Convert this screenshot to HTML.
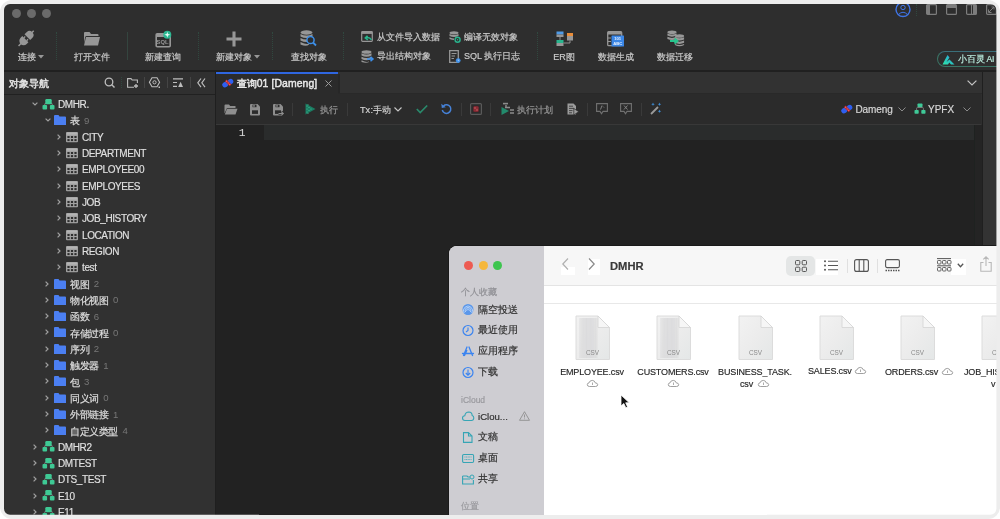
<!DOCTYPE html>
<html><head><meta charset="utf-8"><style>
*{margin:0;padding:0;box-sizing:border-box}
html,body{width:1000px;height:519px;overflow:hidden;background:#fff;font-family:"Liberation Sans",sans-serif}
.a{position:absolute}
#frame{position:absolute;left:0;top:0;width:1000px;height:519px;background:#ededed;border-radius:12px}
#win{will-change:transform;position:absolute;left:0;top:0;width:1000px;height:519px;background:#2e2e2e;clip-path:inset(4px 3.6px 4.2px 4px round 6px)}
.tl{position:absolute;width:9px;height:9px;border-radius:50%;background:#6a6a6a}
.lbl{position:absolute;color:#cacaca;font-size:9px;white-space:nowrap;line-height:11px;-webkit-text-stroke:0.2px currentColor}
.sep{position:absolute;width:0;border-left:1px dotted #30483f}
.vs{position:absolute;width:1px;background:#3c3c3c}
svg{position:absolute;overflow:visible}
.row{position:absolute;height:16px;line-height:16px;font-size:10px;letter-spacing:-0.4px;color:#e0e0e0;white-space:nowrap;-webkit-text-stroke:0.15px currentColor}
.cnt{color:#777777;margin-left:4.5px;font-size:9.6px;letter-spacing:0;-webkit-text-stroke:0;position:relative;top:-0.6px}
.fs{position:absolute;font-size:9px;color:#262626;white-space:nowrap;line-height:11px;letter-spacing:-0.15px;-webkit-text-stroke:0.15px currentColor}
</style></head><body>
<div id="frame"></div>
<div id="win">
<div class="tl" style="left:12.0px;top:9px"></div>
<div class="tl" style="left:26.8px;top:9px"></div>
<div class="tl" style="left:41.8px;top:9px"></div>
<svg style="left:895px;top:2px" width="16" height="16" viewBox="0 0 16 16"><circle cx="8" cy="7.5" r="7" fill="none" stroke="#3f74e6" stroke-width="1.4"/><circle cx="8" cy="5.5" r="2.2" fill="none" stroke="#3f74e6" stroke-width="1"/><path d="M3.5 12.5 Q8 8 12.5 12.5" fill="none" stroke="#3f74e6" stroke-width="1"/></svg>
<div class="sep" style="left:916px;top:4px;height:12px"></div>
<svg style="left:926px;top:4px" width="11" height="11" viewBox="0 0 11 11"><rect x="0.6" y="0.6" width="9.8" height="9.8" rx="1" fill="none" stroke="#7d7d7d" stroke-width="1.2"/><rect x="1" y="1" width="3" height="9" fill="#7d7d7d"/></svg>
<svg style="left:946px;top:4px" width="11" height="11" viewBox="0 0 11 11"><rect x="0.6" y="0.6" width="9.8" height="9.8" rx="1" fill="none" stroke="#7d7d7d" stroke-width="1.2"/><rect x="1" y="1" width="9" height="3" fill="#7d7d7d"/></svg>
<svg style="left:966px;top:4px" width="11" height="11" viewBox="0 0 11 11"><rect x="0.6" y="0.6" width="9.8" height="9.8" rx="1" fill="none" stroke="#7d7d7d" stroke-width="1.2"/><rect x="7" y="1" width="3" height="9" fill="#7d7d7d"/><line x1="5.5" y1="1" x2="5.5" y2="10" stroke="#7d7d7d"/></svg>
<svg style="left:986px;top:4px" width="11" height="11" viewBox="0 0 11 11"><rect x="0.6" y="0.6" width="9.8" height="9.8" rx="1" fill="none" stroke="#7d7d7d" stroke-width="1.2"/><path d="M3 8 L8 3 M5.5 3 H8 V5.5 M2.5 5.5 V8.5 H5.5" fill="none" stroke="#7d7d7d" stroke-width="1"/></svg>
<svg style="left:14px;top:27px" width="24" height="22" viewBox="0 0 24 22"><g transform="translate(12.2 11.3) rotate(45)" fill="#979797"><path d="M-4 -1.6 V-4.6 A4 4 0 0 1 4 -4.6 V-1.6 Z"/><rect x="-0.75" y="-10.6" width="1.5" height="3.5"/><path d="M-4.3 1.2 H4.3 V3.6 A4.3 4.3 0 0 1 -4.3 3.6 Z"/><rect x="-2.6" y="-0.6" width="1.3" height="2"/><rect x="1.3" y="-0.6" width="1.3" height="2"/><rect x="-0.75" y="7" width="1.5" height="3.8"/></g></svg>
<div class="lbl" style="left:27px;top:52px;font-size:9px;color:#cacaca;transform:translateX(-50%);">连接</div>
<svg style="left:38px;top:55px" width="6" height="4" viewBox="0 0 6 4"><path d="M0 0 H6 L3 3.5 Z" fill="#979797"/></svg>
<div class="sep" style="left:56px;top:32px;height:28px"></div>
<svg style="left:83px;top:31px" width="18" height="16" viewBox="0 0 18 16"><path d="M1 2 Q1 1 2 1 H6.5 L8 3 H14.5 Q15.5 3 15.5 4 V5 H3.5 Q2.5 5 2.2 6 L1 12 Z" fill="#979797"/><path d="M3 6 H17 L15 14.5 H1 Z" fill="#979797"/></svg>
<div class="lbl" style="left:92px;top:52px;font-size:9px;color:#cacaca;transform:translateX(-50%);">打开文件</div>
<div class="vs" style="left:127px;top:32px;height:28px;background:#34453f"></div>
<svg style="left:155px;top:30px" width="18" height="17" viewBox="0 0 18 17"><rect x="1.2" y="3.8" width="14" height="13" rx="1" fill="none" stroke="#979797" stroke-width="1.6"/><rect x="1.5" y="4" width="13.5" height="3" fill="#979797"/><text x="7.5" y="14.2" font-size="5.8" font-weight="bold" font-family="Liberation Sans" fill="#979797" text-anchor="middle">SQL</text><circle cx="12.3" cy="4.8" r="4" fill="#2bb892"/><path d="M12.3 1.8 L13 4.1 L15.3 4.8 L13 5.5 L12.3 7.8 L11.6 5.5 L9.3 4.8 L11.6 4.1 Z" fill="#eafff8"/></svg>
<div class="lbl" style="left:163px;top:52px;font-size:9px;color:#cacaca;transform:translateX(-50%);">新建查询</div>
<div class="sep" style="left:198px;top:32px;height:28px"></div>
<svg style="left:226px;top:31px" width="16" height="16" viewBox="0 0 16 16"><path d="M8 0.5 V15.5 M0.5 8 H15.5" stroke="#979797" stroke-width="3.1"/></svg>
<div class="lbl" style="left:234px;top:52px;font-size:9px;color:#cacaca;transform:translateX(-50%);">新建对象</div>
<svg style="left:254px;top:55px" width="6" height="4" viewBox="0 0 6 4"><path d="M0 0 H6 L3 3.5 Z" fill="#979797"/></svg>
<div class="sep" style="left:272px;top:32px;height:28px"></div>
<svg style="left:300px;top:30px" width="17" height="17" viewBox="0 0 17 17"><g fill="#979797"><ellipse cx="6.5" cy="2.5" rx="6" ry="2.2"/><path d="M0.5 4 Q6.5 7 12.5 4 V6.5 Q6.5 9.5 0.5 6.5 Z"/><path d="M0.5 8 Q6.5 11 12.5 8 V10.5 Q6.5 13.5 0.5 10.5 Z"/><path d="M0.5 12 Q6.5 15 9 13.5 V14.5 Q6.5 17 0.5 14.5 Z"/></g><circle cx="10.5" cy="10" r="3.6" fill="#2d2d2d" stroke="#3d8fe8" stroke-width="1.5"/><path d="M13 12.5 L16 15.5" stroke="#3d8fe8" stroke-width="1.8"/></svg>
<div class="lbl" style="left:309px;top:52px;font-size:9px;color:#cacaca;transform:translateX(-50%);">查找对象</div>
<div class="sep" style="left:343px;top:32px;height:28px"></div>
<svg style="left:361px;top:31px" width="12" height="11" viewBox="0 0 12 11"><rect x="0.7" y="0.7" width="10.6" height="9.6" rx="0.8" fill="none" stroke="#979797" stroke-width="1.2"/><rect x="0.7" y="0.7" width="10.6" height="2.2" fill="#979797"/><path d="M10.5 8.8 Q8.5 5.8 5 6.8 M6.5 4.8 L4.3 6.9 L6.8 8.8" fill="none" stroke="#29b58e" stroke-width="1.5"/></svg>
<div class="lbl" style="left:377px;top:32px;font-size:9px;color:#cacaca;">从文件导入数据</div>
<svg style="left:361px;top:50px" width="13" height="12" viewBox="0 0 13 12"><g fill="#979797"><ellipse cx="5.5" cy="2" rx="5" ry="1.8"/><path d="M0.5 3.3 Q5.5 5.8 10.5 3.3 V5.5 Q5.5 8 0.5 5.5 Z"/><path d="M0.5 6.8 Q5.5 9.3 10.5 6.8 V9 Q5.5 11.5 0.5 9 Z"/><path d="M0.5 10.3 Q5.5 12.8 8 11.5 V12 Q5.5 13.5 0.5 12 Z"/></g><path d="M6 9 H12 M9.5 6.8 L12 9 L9.5 11.2" fill="none" stroke="#3d8fe8" stroke-width="1.5"/></svg>
<div class="lbl" style="left:377px;top:51px;font-size:9px;color:#cacaca;">导出结构对象</div>
<svg style="left:449px;top:31px" width="12" height="12" viewBox="0 0 12 12"><g fill="#979797"><ellipse cx="5" cy="1.8" rx="4.5" ry="1.6"/><path d="M0.5 3 Q5 5.2 9.5 3 V5 Q5 7.2 0.5 5 Z"/><path d="M0.5 6.2 Q3 7.4 5 7.4 V9 Q3 9 0.5 8 Z"/></g><circle cx="8.6" cy="8.8" r="2.5" fill="none" stroke="#29b58e" stroke-width="1.4"/><circle cx="8.6" cy="8.8" r="0.7" fill="#29b58e"/></svg>
<div class="lbl" style="left:464px;top:32px;font-size:9px;color:#cacaca;">编译无效对象</div>
<svg style="left:449px;top:50px" width="12" height="13" viewBox="0 0 12 13"><path d="M0.7 0.7 H9.3 V12.3 H0.7 Z" fill="none" stroke="#979797" stroke-width="1.3"/><path d="M2.5 3.5 H7.5 M2.5 6 H6 M2.5 8.5 H5" stroke="#979797" stroke-width="1"/><circle cx="9.2" cy="10.6" r="2.4" fill="#3d8fe8"/><path d="M9.2 9.4 V10.7 H10.2" stroke="#dbe9ff" stroke-width="0.6" fill="none"/></svg>
<div class="lbl" style="left:464px;top:51px;font-size:9px;color:#cacaca;">SQL 执行日志</div>
<div class="sep" style="left:537px;top:32px;height:28px"></div>
<svg style="left:556px;top:31px" width="18" height="16" viewBox="0 0 18 16"><rect x="0.5" y="0.5" width="7" height="3" fill="#4f9be8"/><rect x="0.5" y="3.5" width="7" height="2.5" fill="#979797"/><rect x="11" y="2" width="6" height="3" fill="#e88d3a"/><rect x="11" y="5" width="6" height="4.5" fill="#979797"/><rect x="0.5" y="9" width="7" height="3" fill="#29b58e"/><rect x="0.5" y="12" width="7" height="3" fill="#979797"/><path d="M4 6 V9 M7.5 12 H14 V9.5" fill="none" stroke="#979797" stroke-width="0.9"/></svg>
<div class="lbl" style="left:564px;top:52px;font-size:9px;color:#cacaca;transform:translateX(-50%);">ER图</div>
<svg style="left:607px;top:31px" width="18" height="16" viewBox="0 0 18 16"><rect x="0.7" y="0.7" width="14" height="14" rx="1" fill="none" stroke="#979797" stroke-width="1.3"/><rect x="0.7" y="0.7" width="14" height="2.8" fill="#979797"/><path d="M0.7 7 H4 M0.7 10.5 H4" stroke="#979797" stroke-width="1"/><rect x="4.5" y="4.5" width="12.5" height="11" rx="0.6" fill="#3a86e6"/><text x="10.7" y="9" font-size="4.2" font-weight="bold" font-family="Liberation Sans" fill="#e8f2ff" text-anchor="middle">101</text><text x="10.7" y="14" font-size="4.2" font-weight="bold" font-family="Liberation Sans" fill="#e8f2ff" text-anchor="middle">ABC</text></svg>
<div class="lbl" style="left:616px;top:52px;font-size:9px;color:#cacaca;transform:translateX(-50%);">数据生成</div>
<svg style="left:667px;top:30px" width="18" height="17" viewBox="0 0 18 17"><g fill="#979797"><ellipse cx="5" cy="2.2" rx="4.6" ry="1.8"/><path d="M0.4 3.4 Q5 5.6 9.6 3.4 V5.6 Q5 7.8 0.4 5.6 Z"/><path d="M0.4 6.8 Q5 9 9.6 6.8 V9 Q5 11.2 0.4 9 Z"/><ellipse cx="12.5" cy="6" rx="4.6" ry="1.8"/><path d="M7.9 7.2 Q12.5 9.4 17.1 7.2 V9.4 Q12.5 11.6 7.9 9.4 Z"/><path d="M7.9 10.6 Q12.5 12.8 17.1 10.6 V12.8 Q12.5 15 7.9 12.8 Z"/><path d="M7.9 14 Q12.5 16.2 17.1 14 V15 Q12.5 17.5 7.9 15 Z"/></g><path d="M3 11 H10 M7.5 8.5 L10.5 11 L7.5 13.5" fill="none" stroke="#29c48e" stroke-width="1.8"/></svg>
<div class="lbl" style="left:675px;top:52px;font-size:9px;color:#cacaca;transform:translateX(-50%);">数据迁移</div>
<div class="a" style="left:936.5px;top:51px;width:80px;height:16px;border-radius:8px;border:1px solid #3b7566;border-top-color:#3a6f7a"></div>
<svg style="left:942px;top:54px" width="14" height="11" viewBox="0 0 14 11"><defs><linearGradient id="ai" x1="0" y1="1" x2="1" y2="0"><stop offset="0" stop-color="#2ee6a8"/><stop offset="0.6" stop-color="#2ab8c8"/><stop offset="1" stop-color="#3a7de8"/></linearGradient></defs><path d="M0.5 10.5 L5.5 1 L7.5 3.5 L4.5 8 L7.5 5.5 L12.5 10.5 L9 10.5 L7.3 8.5 L6 10.5 Z" fill="url(#ai)"/></svg>
<div class="lbl" style="left:958px;top:53.5px;font-size:8.6px;color:#b8eadc;letter-spacing:-0.2px">小百灵 AI</div>
<div class="a" style="left:0;top:72px;width:215px;height:447px;background:#313131"></div>
<div class="a" style="left:0;top:72px;width:215px;height:22px;background:#303030"></div>
<div class="a" style="left:214.5px;top:72px;width:1.5px;height:447px;background:#1f1f1f"></div>
<div class="a" style="left:0;top:93.5px;width:215px;height:1.5px;background:#212121"></div>
<div class="lbl" style="left:9.3px;top:77.8px;font-size:9.5px;color:#e4e4e4;-webkit-text-stroke:0.45px currentColor">对象导航</div>
<svg style="left:104px;top:77px" width="12" height="12" viewBox="0 0 12 12"><circle cx="5" cy="5" r="3.8" fill="none" stroke="#bdbdbd" stroke-width="1.3"/><path d="M7.8 7.8 L10.5 10.5" stroke="#bdbdbd" stroke-width="1.4"/></svg>
<div class="sep" style="left:120.5px;top:77px;height:11px"></div>
<div class="vs" style="left:143.5px;top:77px;height:11px;background:#454545"></div>
<div class="vs" style="left:166.5px;top:77px;height:11px;background:#454545"></div>
<div class="vs" style="left:189.5px;top:77px;height:11px;background:#454545"></div>
<svg style="left:127px;top:78px" width="12" height="10" viewBox="0 0 12 10"><path d="M7 9.3 H0.6 V0.6 H4 L5.2 2 H10.4 V5" fill="none" stroke="#bdbdbd" stroke-width="1.1"/><path d="M9 6 V10 M7 8 H11" stroke="#bdbdbd" stroke-width="1.3"/></svg>
<svg style="left:149px;top:77px" width="12" height="12" viewBox="0 0 12 12"><path d="M3 0.8 H8 L10.6 5.3 L8 9.8 H3 L0.4 5.3 Z" fill="none" stroke="#bdbdbd" stroke-width="1.1"/><circle cx="5.5" cy="5.3" r="1.6" fill="none" stroke="#bdbdbd" stroke-width="1"/><path d="M9.5 9.5 L11 9.5 L11 11 L9.5 11Z" fill="#bdbdbd"/></svg>
<svg style="left:173px;top:78px" width="11" height="10" viewBox="0 0 11 10"><path d="M0 0.8 H10 M0 4.5 H4 M0 8.3 H4" stroke="#bdbdbd" stroke-width="1.2"/><path d="M5.2 9 L7.6 3.8 L10 9 Z" fill="#bdbdbd"/></svg>
<svg style="left:197px;top:78px" width="9" height="10" viewBox="0 0 9 10"><path d="M4 0.5 L0.8 4.8 L4 9.1 M8 0.5 L4.8 4.8 L8 9.1" fill="none" stroke="#bdbdbd" stroke-width="1.15"/></svg>
<div class="a" style="left:216px;top:72px;width:767px;height:22px;background:#323232"></div>
<div class="a" style="left:216px;top:74px;width:122px;height:20px;background:#2b2b2b"></div>
<div class="a" style="left:216px;top:72px;width:122px;height:2px;background:#2f66e0"></div>
<div class="a" style="left:338px;top:74px;width:2px;height:20px;background:#272727"></div>
<div class="a" style="left:338px;top:93px;width:645px;height:1px;background:#292929"></div>
<svg style="left:222px;top:78px" width="12" height="10" viewBox="0 0 12 10"><ellipse cx="3.2" cy="6.6" rx="3" ry="2.7" transform="rotate(-35 3.2 6.6)" fill="#2f5ff0"/><ellipse cx="8.4" cy="3.6" rx="3" ry="2.7" transform="rotate(-35 8.4 3.6)" fill="#2f5ff0"/><path d="M3.7 2.4 L8.6 7.4" stroke="#b02c36" stroke-width="2.6"/><g fill="#ff5a50"><circle cx="4.6" cy="3.3" r="0.7"/><circle cx="6.2" cy="4.9" r="0.7"/><circle cx="7.6" cy="6.4" r="0.7"/></g></svg>
<div class="lbl" style="left:236.5px;top:77.8px;font-size:10.4px;color:#e8e8e8;-webkit-text-stroke:0.45px currentColor;letter-spacing:0.1px">查询01 [Dameng]</div>
<svg style="left:325px;top:80px" width="7" height="7" viewBox="0 0 7 7"><path d="M0.5 0.5 L6.5 6.5 M6.5 0.5 L0.5 6.5" stroke="#9a9a9a" stroke-width="1"/></svg>
<svg style="left:966.5px;top:79.5px" width="10" height="6" viewBox="0 0 10 6"><path d="M0.6 0.6 L5 5 L9.4 0.6" fill="none" stroke="#c4c4c4" stroke-width="1.2"/></svg>
<div class="a" style="left:216px;top:94px;width:765px;height:30px;background:#2b2b2b"></div>
<div class="a" style="left:216px;top:124px;width:765px;height:1px;background:#383838"></div>
<svg style="left:224px;top:104px" width="14" height="11" viewBox="0 0 14 11"><path d="M0.5 1.5 Q0.5 0.5 1.5 0.5 H5 L6.2 2 H11.5 V4 H3 L0.5 9.5 Z" fill="#8e8e8e"/><path d="M3 4.8 H13.5 L11.5 10.5 H0.8 Z" fill="#8e8e8e"/></svg>
<svg style="left:249.5px;top:103.5px" width="10" height="11.5" viewBox="0 0 10 11.5"><path d="M0 1 Q0 0 1 0 H7.5 L10 2.5 V10.5 Q10 11.5 9 11.5 H1 Q0 11.5 0 10.5 Z" fill="#8e8e8e"/><rect x="2.5" y="0.6" width="4" height="2.6" fill="#2b2b2b"/><rect x="3.3" y="0.9" width="1.4" height="1.9" fill="#8e8e8e"/><rect x="2" y="6.3" width="6" height="3.6" fill="#2b2b2b"/></svg>
<svg style="left:273px;top:103.5px" width="12" height="12" viewBox="0 0 12 12"><path d="M0 1 Q0 0 1 0 H7.5 L10 2.5 V10.5 Q10 11.5 9 11.5 H1 Q0 11.5 0 10.5 Z" fill="#8e8e8e"/><rect x="2.5" y="0.6" width="4" height="2.6" fill="#2b2b2b"/><rect x="3.3" y="0.9" width="1.4" height="1.9" fill="#8e8e8e"/><rect x="2" y="6.3" width="6" height="3.6" fill="#2b2b2b"/><path d="M5.5 9.5 H10 M8.3 7.6 L10.3 9.5 L8.3 11.4" fill="none" stroke="#2b2b2b" stroke-width="2.4"/><path d="M5.5 9.5 H10 M8.3 7.6 L10.3 9.5 L8.3 11.4" fill="none" stroke="#8e8e8e" stroke-width="1.1"/></svg>
<div class="vs" style="left:292px;top:103px;height:13px;background:#3a3a3a"></div>
<div class="vs" style="left:347px;top:103px;height:13px;background:#3a3a3a"></div>
<div class="vs" style="left:461px;top:103px;height:13px;background:#3a3a3a"></div>
<div class="vs" style="left:490px;top:103px;height:13px;background:#3a3a3a"></div>
<div class="vs" style="left:587px;top:103px;height:13px;background:#3a3a3a"></div>
<div class="vs" style="left:641px;top:103px;height:13px;background:#3a3a3a"></div>
<svg style="left:305px;top:103px" width="11" height="12" viewBox="0 0 11 12"><path d="M0.5 0.5 L10.5 6 L0.5 11.5 Z" fill="#1b7d63"/><g fill="#4fcfa5"><circle cx="2" cy="3" r="0.5"/><circle cx="2" cy="6" r="0.5"/><circle cx="2" cy="9" r="0.5"/><circle cx="4" cy="4.5" r="0.5"/><circle cx="4" cy="7.5" r="0.5"/><circle cx="6" cy="6" r="0.5"/><circle cx="3" cy="1.8" r="0.5"/><circle cx="3" cy="10.2" r="0.5"/></g></svg>
<div class="lbl" style="left:320px;top:104.5px;font-size:9px;color:#969696;">执行</div>
<div class="lbl" style="left:360px;top:104.8px;font-size:9.2px;color:#d0d0d0;letter-spacing:-0.2px">Tx<span style="margin:0 0.6px">:</span>手动</div>
<svg style="left:394px;top:107px" width="8" height="5" viewBox="0 0 8 5"><path d="M0.5 0.5 L4 4 L7.5 0.5" fill="none" stroke="#c8c8c8" stroke-width="1.1"/></svg>
<svg style="left:416px;top:104px" width="12" height="10" viewBox="0 0 12 10"><path d="M0.8 5 L4.2 8.5 L11.2 1.5" fill="none" stroke="#2a8a6c" stroke-width="1.7"/></svg>
<svg style="left:441px;top:103px" width="11" height="12" viewBox="0 0 11 12"><path d="M2.5 3 A4.3 4.3 0 1 1 1.3 7" fill="none" stroke="#4682d8" stroke-width="1.5"/><path d="M0.3 0.8 L0.8 5 L4.8 4.2 Z" fill="#4682d8"/></svg>
<svg style="left:470px;top:103px" width="12" height="12" viewBox="0 0 12 12"><rect x="0.6" y="0.6" width="10.8" height="10.8" rx="1" fill="none" stroke="#5a5a5a" stroke-width="1.2"/><rect x="3.2" y="3" width="5.6" height="6" rx="1.5" fill="#7a2630"/><circle cx="5" cy="5" r="0.8" fill="#e06a6a"/><circle cx="7" cy="7" r="0.8" fill="#e06a6a"/><circle cx="7" cy="5" r="0.6" fill="#c04a4a"/><circle cx="5" cy="7" r="0.6" fill="#c04a4a"/></svg>
<svg style="left:501px;top:102px" width="14" height="13" viewBox="0 0 14 13"><path d="M0.5 5 L8 9 L0.5 13 Z" fill="#238a6c"/><rect x="2" y="0.8" width="5" height="1.6" fill="#8c8c8c"/><path d="M5 3 V5 M4 5.5 H9 M9 8 H13 M9 11 H13" stroke="#8c8c8c" stroke-width="1.4"/></svg>
<div class="lbl" style="left:517px;top:104.5px;font-size:9px;color:#969696;">执行计划</div>
<svg style="left:566.5px;top:103px" width="12" height="12" viewBox="0 0 12 12"><path d="M0.5 0.5 H6.5 L9 3 V11.5 H0.5 Z" fill="#9c9c9c"/><path d="M2 3.2 H6 M2 5.4 H7 M2 7.6 H5.5 M2 9.8 H5" stroke="#3a3a3a" stroke-width="0.9"/><path d="M6.8 5.5 L11.8 8.7 L6.8 11.9 Z" fill="#9c9c9c" stroke="#2b2b2b" stroke-width="0.7"/></svg>
<svg style="left:596px;top:103px" width="12" height="12" viewBox="0 0 12 12"><path d="M0.6 0.6 H11.4 V8.4 H7 L5.5 10.8 L4 8.4 H0.6 Z" fill="none" stroke="#707070" stroke-width="1.1"/><path d="M4.5 6.5 L6 2.5 M7 3.5 L8 4.5" stroke="#8a8a8a" stroke-width="0.9"/></svg>
<svg style="left:620px;top:103px" width="12" height="12" viewBox="0 0 12 12"><path d="M0.6 0.6 H11.4 V8.4 H7 L5.5 10.8 L4 8.4 H0.6 Z" fill="none" stroke="#707070" stroke-width="1.1"/><path d="M4 2.5 L7.5 6.5 M7.5 2.5 L4 6.5" stroke="#8a8a8a" stroke-width="0.9"/></svg>
<svg style="left:650px;top:102px" width="12" height="13" viewBox="0 0 12 13"><path d="M1 12 L8 5" stroke="#9a9a9a" stroke-width="1.8"/><path d="M3 0.5 L3.5 1.8 L4.8 2.3 L3.5 2.8 L3 4.1 L2.5 2.8 L1.2 2.3 L2.5 1.8Z" fill="#3f8fd8"/><path d="M9.5 0.5 L10 1.8 L11.3 2.3 L10 2.8 L9.5 4.1 L9 2.8 L7.7 2.3 L9 1.8Z" fill="#3f8fd8"/><path d="M9.5 7.5 L10 8.8 L11.3 9.3 L10 9.8 L9.5 11.1 L9 9.8 L7.7 9.3 L9 8.8Z" fill="#3f8fd8"/></svg>
<svg style="left:840.5px;top:104px" width="12" height="10" viewBox="0 0 12 10"><ellipse cx="3.2" cy="6.6" rx="3" ry="2.7" transform="rotate(-35 3.2 6.6)" fill="#2f5ff0"/><ellipse cx="8.4" cy="3.6" rx="3" ry="2.7" transform="rotate(-35 8.4 3.6)" fill="#2f5ff0"/><path d="M3.7 2.4 L8.6 7.4" stroke="#b02c36" stroke-width="2.6"/><g fill="#ff5a50"><circle cx="4.6" cy="3.3" r="0.7"/><circle cx="6.2" cy="4.9" r="0.7"/><circle cx="7.6" cy="6.4" r="0.7"/></g></svg>
<div class="lbl" style="left:855.5px;top:104px;font-size:10px;color:#d6d6d6;letter-spacing:-0.1px">Dameng</div>
<svg style="left:898px;top:107px" width="8" height="5" viewBox="0 0 8 5"><path d="M0.5 0.5 L4 4 L7.5 0.5" fill="none" stroke="#8a8a8a" stroke-width="1"/></svg>
<svg style="left:914px;top:103px" width="12" height="11" viewBox="0 0 12 11"><g fill="#3fc897"><rect x="3.5" y="0.5" width="5" height="3.8" rx="0.8"/><rect x="0.5" y="7" width="4.2" height="3.8" rx="0.8"/><rect x="7.3" y="7" width="4.2" height="3.8" rx="0.8"/></g><path d="M2.6 7 V5.5 Q2.6 4.5 3.6 4.5 H8.4 Q9.4 4.5 9.4 5.5 V7" fill="none" stroke="#8a8a8a" stroke-width="0.8"/></svg>
<div class="lbl" style="left:928px;top:104px;font-size:10px;color:#d6d6d6;">YPFX</div>
<svg style="left:963px;top:107px" width="8" height="5" viewBox="0 0 8 5"><path d="M0.5 0.5 L4 4 L7.5 0.5" fill="none" stroke="#8a8a8a" stroke-width="1"/></svg>
<div class="a" style="left:216px;top:125px;width:759px;height:395px;background:#222222"></div>
<div class="a" style="left:264px;top:125px;width:711px;height:15px;background:#2a2c2c"></div>
<div class="lbl" style="left:239px;top:127.5px;font-size:10.5px;color:#d4d4d4;font-family:Liberation Mono,monospace;-webkit-text-stroke:0.2px currentColor">1</div>
<div class="a" style="left:974px;top:125px;width:8px;height:395px;background:#242424;border-left:1px solid #1e2220"></div>
<div class="a" style="left:982px;top:72px;width:14px;height:447px;background:#333333;border-left:1px solid #1f1f1f"></div>
<svg style="left:32px;top:102.0px" width="7" height="4" viewBox="0 0 7 4"><path d="M0.6 0.6 L3 3 L5.4 0.6" fill="none" stroke="#a0a0a0" stroke-width="1.2"/></svg>
<svg style="left:42px;top:98.5px" width="13" height="11" viewBox="0 0 13 11"><path d="M2.8 7 V5.5 Q2.8 4 4.3 4 H8.7 Q10.2 4 10.2 5.5 V7" fill="none" stroke="#9a9a9a" stroke-width="0.9"/><g fill="#3ec994"><rect x="3.3" y="0" width="6.4" height="5.2" rx="1.2"/><rect x="0.5" y="6" width="4.6" height="4.6" rx="1"/><rect x="7.9" y="6" width="4.6" height="4.6" rx="1"/></g></svg>
<div class="row" style="left:58px;top:97.1px">DMHR.</div>
<svg style="left:44.5px;top:118.32px" width="7" height="4" viewBox="0 0 7 4"><path d="M0.6 0.6 L3 3 L5.4 0.6" fill="none" stroke="#a0a0a0" stroke-width="1.2"/></svg>
<svg style="left:54px;top:115.32px" width="12" height="10" viewBox="0 0 12 10"><path d="M0 1 Q0 0 1 0 H4.5 L5.5 1.5 H11 Q12 1.5 12 2.5 V10 H0 Z" fill="#4b7ff2"/></svg>
<div class="row" style="left:70px;top:113.41999999999999px">表<span class="cnt">9</span></div>
<svg style="left:56.5px;top:133.64px" width="4" height="7" viewBox="0 0 4 7"><path d="M0.6 0.6 L3 3 L0.6 5.4" fill="none" stroke="#a0a0a0" stroke-width="1.2"/></svg>
<svg style="left:66px;top:131.83999999999997px" width="12" height="10.2" viewBox="0 0 12 10.2"><rect x="0" y="0" width="12" height="10.2" rx="1" fill="#a2a2a2"/><rect x="0.8" y="0.6" width="10.4" height="2" fill="#b4b4b4"/><rect x="1.4" y="4" width="2.2" height="2" fill="#2e2e2e"/><rect x="4.9" y="4" width="2.2" height="2" fill="#2e2e2e"/><rect x="8.4" y="4" width="2.2" height="2" fill="#2e2e2e"/><rect x="1.4" y="7.1" width="2.2" height="2" fill="#2e2e2e"/><rect x="4.9" y="7.1" width="2.2" height="2" fill="#2e2e2e"/><rect x="8.4" y="7.1" width="2.2" height="2" fill="#2e2e2e"/></svg>
<div class="row" style="left:82px;top:129.73999999999998px">CITY</div>
<svg style="left:56.5px;top:149.96px" width="4" height="7" viewBox="0 0 4 7"><path d="M0.6 0.6 L3 3 L0.6 5.4" fill="none" stroke="#a0a0a0" stroke-width="1.2"/></svg>
<svg style="left:66px;top:148.16px" width="12" height="10.2" viewBox="0 0 12 10.2"><rect x="0" y="0" width="12" height="10.2" rx="1" fill="#a2a2a2"/><rect x="0.8" y="0.6" width="10.4" height="2" fill="#b4b4b4"/><rect x="1.4" y="4" width="2.2" height="2" fill="#2e2e2e"/><rect x="4.9" y="4" width="2.2" height="2" fill="#2e2e2e"/><rect x="8.4" y="4" width="2.2" height="2" fill="#2e2e2e"/><rect x="1.4" y="7.1" width="2.2" height="2" fill="#2e2e2e"/><rect x="4.9" y="7.1" width="2.2" height="2" fill="#2e2e2e"/><rect x="8.4" y="7.1" width="2.2" height="2" fill="#2e2e2e"/></svg>
<div class="row" style="left:82px;top:146.06px">DEPARTMENT</div>
<svg style="left:56.5px;top:166.28px" width="4" height="7" viewBox="0 0 4 7"><path d="M0.6 0.6 L3 3 L0.6 5.4" fill="none" stroke="#a0a0a0" stroke-width="1.2"/></svg>
<svg style="left:66px;top:164.48px" width="12" height="10.2" viewBox="0 0 12 10.2"><rect x="0" y="0" width="12" height="10.2" rx="1" fill="#a2a2a2"/><rect x="0.8" y="0.6" width="10.4" height="2" fill="#b4b4b4"/><rect x="1.4" y="4" width="2.2" height="2" fill="#2e2e2e"/><rect x="4.9" y="4" width="2.2" height="2" fill="#2e2e2e"/><rect x="8.4" y="4" width="2.2" height="2" fill="#2e2e2e"/><rect x="1.4" y="7.1" width="2.2" height="2" fill="#2e2e2e"/><rect x="4.9" y="7.1" width="2.2" height="2" fill="#2e2e2e"/><rect x="8.4" y="7.1" width="2.2" height="2" fill="#2e2e2e"/></svg>
<div class="row" style="left:82px;top:162.38px">EMPLOYEE00</div>
<svg style="left:56.5px;top:182.6px" width="4" height="7" viewBox="0 0 4 7"><path d="M0.6 0.6 L3 3 L0.6 5.4" fill="none" stroke="#a0a0a0" stroke-width="1.2"/></svg>
<svg style="left:66px;top:180.79999999999998px" width="12" height="10.2" viewBox="0 0 12 10.2"><rect x="0" y="0" width="12" height="10.2" rx="1" fill="#a2a2a2"/><rect x="0.8" y="0.6" width="10.4" height="2" fill="#b4b4b4"/><rect x="1.4" y="4" width="2.2" height="2" fill="#2e2e2e"/><rect x="4.9" y="4" width="2.2" height="2" fill="#2e2e2e"/><rect x="8.4" y="4" width="2.2" height="2" fill="#2e2e2e"/><rect x="1.4" y="7.1" width="2.2" height="2" fill="#2e2e2e"/><rect x="4.9" y="7.1" width="2.2" height="2" fill="#2e2e2e"/><rect x="8.4" y="7.1" width="2.2" height="2" fill="#2e2e2e"/></svg>
<div class="row" style="left:82px;top:178.7px">EMPLOYEES</div>
<svg style="left:56.5px;top:198.92000000000002px" width="4" height="7" viewBox="0 0 4 7"><path d="M0.6 0.6 L3 3 L0.6 5.4" fill="none" stroke="#a0a0a0" stroke-width="1.2"/></svg>
<svg style="left:66px;top:197.12px" width="12" height="10.2" viewBox="0 0 12 10.2"><rect x="0" y="0" width="12" height="10.2" rx="1" fill="#a2a2a2"/><rect x="0.8" y="0.6" width="10.4" height="2" fill="#b4b4b4"/><rect x="1.4" y="4" width="2.2" height="2" fill="#2e2e2e"/><rect x="4.9" y="4" width="2.2" height="2" fill="#2e2e2e"/><rect x="8.4" y="4" width="2.2" height="2" fill="#2e2e2e"/><rect x="1.4" y="7.1" width="2.2" height="2" fill="#2e2e2e"/><rect x="4.9" y="7.1" width="2.2" height="2" fill="#2e2e2e"/><rect x="8.4" y="7.1" width="2.2" height="2" fill="#2e2e2e"/></svg>
<div class="row" style="left:82px;top:195.02px">JOB</div>
<svg style="left:56.5px;top:215.24px" width="4" height="7" viewBox="0 0 4 7"><path d="M0.6 0.6 L3 3 L0.6 5.4" fill="none" stroke="#a0a0a0" stroke-width="1.2"/></svg>
<svg style="left:66px;top:213.44px" width="12" height="10.2" viewBox="0 0 12 10.2"><rect x="0" y="0" width="12" height="10.2" rx="1" fill="#a2a2a2"/><rect x="0.8" y="0.6" width="10.4" height="2" fill="#b4b4b4"/><rect x="1.4" y="4" width="2.2" height="2" fill="#2e2e2e"/><rect x="4.9" y="4" width="2.2" height="2" fill="#2e2e2e"/><rect x="8.4" y="4" width="2.2" height="2" fill="#2e2e2e"/><rect x="1.4" y="7.1" width="2.2" height="2" fill="#2e2e2e"/><rect x="4.9" y="7.1" width="2.2" height="2" fill="#2e2e2e"/><rect x="8.4" y="7.1" width="2.2" height="2" fill="#2e2e2e"/></svg>
<div class="row" style="left:82px;top:211.34px">JOB_HISTORY</div>
<svg style="left:56.5px;top:231.56px" width="4" height="7" viewBox="0 0 4 7"><path d="M0.6 0.6 L3 3 L0.6 5.4" fill="none" stroke="#a0a0a0" stroke-width="1.2"/></svg>
<svg style="left:66px;top:229.76px" width="12" height="10.2" viewBox="0 0 12 10.2"><rect x="0" y="0" width="12" height="10.2" rx="1" fill="#a2a2a2"/><rect x="0.8" y="0.6" width="10.4" height="2" fill="#b4b4b4"/><rect x="1.4" y="4" width="2.2" height="2" fill="#2e2e2e"/><rect x="4.9" y="4" width="2.2" height="2" fill="#2e2e2e"/><rect x="8.4" y="4" width="2.2" height="2" fill="#2e2e2e"/><rect x="1.4" y="7.1" width="2.2" height="2" fill="#2e2e2e"/><rect x="4.9" y="7.1" width="2.2" height="2" fill="#2e2e2e"/><rect x="8.4" y="7.1" width="2.2" height="2" fill="#2e2e2e"/></svg>
<div class="row" style="left:82px;top:227.66px">LOCATION</div>
<svg style="left:56.5px;top:247.88px" width="4" height="7" viewBox="0 0 4 7"><path d="M0.6 0.6 L3 3 L0.6 5.4" fill="none" stroke="#a0a0a0" stroke-width="1.2"/></svg>
<svg style="left:66px;top:246.07999999999998px" width="12" height="10.2" viewBox="0 0 12 10.2"><rect x="0" y="0" width="12" height="10.2" rx="1" fill="#a2a2a2"/><rect x="0.8" y="0.6" width="10.4" height="2" fill="#b4b4b4"/><rect x="1.4" y="4" width="2.2" height="2" fill="#2e2e2e"/><rect x="4.9" y="4" width="2.2" height="2" fill="#2e2e2e"/><rect x="8.4" y="4" width="2.2" height="2" fill="#2e2e2e"/><rect x="1.4" y="7.1" width="2.2" height="2" fill="#2e2e2e"/><rect x="4.9" y="7.1" width="2.2" height="2" fill="#2e2e2e"/><rect x="8.4" y="7.1" width="2.2" height="2" fill="#2e2e2e"/></svg>
<div class="row" style="left:82px;top:243.98px">REGION</div>
<svg style="left:56.5px;top:264.2px" width="4" height="7" viewBox="0 0 4 7"><path d="M0.6 0.6 L3 3 L0.6 5.4" fill="none" stroke="#a0a0a0" stroke-width="1.2"/></svg>
<svg style="left:66px;top:262.4px" width="12" height="10.2" viewBox="0 0 12 10.2"><rect x="0" y="0" width="12" height="10.2" rx="1" fill="#a2a2a2"/><rect x="0.8" y="0.6" width="10.4" height="2" fill="#b4b4b4"/><rect x="1.4" y="4" width="2.2" height="2" fill="#2e2e2e"/><rect x="4.9" y="4" width="2.2" height="2" fill="#2e2e2e"/><rect x="8.4" y="4" width="2.2" height="2" fill="#2e2e2e"/><rect x="1.4" y="7.1" width="2.2" height="2" fill="#2e2e2e"/><rect x="4.9" y="7.1" width="2.2" height="2" fill="#2e2e2e"/><rect x="8.4" y="7.1" width="2.2" height="2" fill="#2e2e2e"/></svg>
<div class="row" style="left:82px;top:260.3px">test</div>
<svg style="left:44.6px;top:280.52px" width="4" height="7" viewBox="0 0 4 7"><path d="M0.6 0.6 L3 3 L0.6 5.4" fill="none" stroke="#a0a0a0" stroke-width="1.2"/></svg>
<svg style="left:54px;top:278.52px" width="12" height="10" viewBox="0 0 12 10"><path d="M0 1 Q0 0 1 0 H4.5 L5.5 1.5 H11 Q12 1.5 12 2.5 V10 H0 Z" fill="#4b7ff2"/></svg>
<div class="row" style="left:70px;top:276.62px">视图<span class="cnt">2</span></div>
<svg style="left:44.6px;top:296.84000000000003px" width="4" height="7" viewBox="0 0 4 7"><path d="M0.6 0.6 L3 3 L0.6 5.4" fill="none" stroke="#a0a0a0" stroke-width="1.2"/></svg>
<svg style="left:54px;top:294.84000000000003px" width="12" height="10" viewBox="0 0 12 10"><path d="M0 1 Q0 0 1 0 H4.5 L5.5 1.5 H11 Q12 1.5 12 2.5 V10 H0 Z" fill="#4b7ff2"/></svg>
<div class="row" style="left:70px;top:292.94000000000005px">物化视图<span class="cnt">0</span></div>
<svg style="left:44.6px;top:313.15999999999997px" width="4" height="7" viewBox="0 0 4 7"><path d="M0.6 0.6 L3 3 L0.6 5.4" fill="none" stroke="#a0a0a0" stroke-width="1.2"/></svg>
<svg style="left:54px;top:311.15999999999997px" width="12" height="10" viewBox="0 0 12 10"><path d="M0 1 Q0 0 1 0 H4.5 L5.5 1.5 H11 Q12 1.5 12 2.5 V10 H0 Z" fill="#4b7ff2"/></svg>
<div class="row" style="left:70px;top:309.26px">函数<span class="cnt">6</span></div>
<svg style="left:44.6px;top:329.48px" width="4" height="7" viewBox="0 0 4 7"><path d="M0.6 0.6 L3 3 L0.6 5.4" fill="none" stroke="#a0a0a0" stroke-width="1.2"/></svg>
<svg style="left:54px;top:327.48px" width="12" height="10" viewBox="0 0 12 10"><path d="M0 1 Q0 0 1 0 H4.5 L5.5 1.5 H11 Q12 1.5 12 2.5 V10 H0 Z" fill="#4b7ff2"/></svg>
<div class="row" style="left:70px;top:325.58000000000004px">存储过程<span class="cnt">0</span></div>
<svg style="left:44.6px;top:345.8px" width="4" height="7" viewBox="0 0 4 7"><path d="M0.6 0.6 L3 3 L0.6 5.4" fill="none" stroke="#a0a0a0" stroke-width="1.2"/></svg>
<svg style="left:54px;top:343.8px" width="12" height="10" viewBox="0 0 12 10"><path d="M0 1 Q0 0 1 0 H4.5 L5.5 1.5 H11 Q12 1.5 12 2.5 V10 H0 Z" fill="#4b7ff2"/></svg>
<div class="row" style="left:70px;top:341.90000000000003px">序列<span class="cnt">2</span></div>
<svg style="left:44.6px;top:362.12px" width="4" height="7" viewBox="0 0 4 7"><path d="M0.6 0.6 L3 3 L0.6 5.4" fill="none" stroke="#a0a0a0" stroke-width="1.2"/></svg>
<svg style="left:54px;top:360.12px" width="12" height="10" viewBox="0 0 12 10"><path d="M0 1 Q0 0 1 0 H4.5 L5.5 1.5 H11 Q12 1.5 12 2.5 V10 H0 Z" fill="#4b7ff2"/></svg>
<div class="row" style="left:70px;top:358.22px">触发器<span class="cnt">1</span></div>
<svg style="left:44.6px;top:378.44px" width="4" height="7" viewBox="0 0 4 7"><path d="M0.6 0.6 L3 3 L0.6 5.4" fill="none" stroke="#a0a0a0" stroke-width="1.2"/></svg>
<svg style="left:54px;top:376.44px" width="12" height="10" viewBox="0 0 12 10"><path d="M0 1 Q0 0 1 0 H4.5 L5.5 1.5 H11 Q12 1.5 12 2.5 V10 H0 Z" fill="#4b7ff2"/></svg>
<div class="row" style="left:70px;top:374.54px">包<span class="cnt">3</span></div>
<svg style="left:44.6px;top:394.76px" width="4" height="7" viewBox="0 0 4 7"><path d="M0.6 0.6 L3 3 L0.6 5.4" fill="none" stroke="#a0a0a0" stroke-width="1.2"/></svg>
<svg style="left:54px;top:392.76px" width="12" height="10" viewBox="0 0 12 10"><path d="M0 1 Q0 0 1 0 H4.5 L5.5 1.5 H11 Q12 1.5 12 2.5 V10 H0 Z" fill="#4b7ff2"/></svg>
<div class="row" style="left:70px;top:390.86px">同义词<span class="cnt">0</span></div>
<svg style="left:44.6px;top:411.08px" width="4" height="7" viewBox="0 0 4 7"><path d="M0.6 0.6 L3 3 L0.6 5.4" fill="none" stroke="#a0a0a0" stroke-width="1.2"/></svg>
<svg style="left:54px;top:409.08px" width="12" height="10" viewBox="0 0 12 10"><path d="M0 1 Q0 0 1 0 H4.5 L5.5 1.5 H11 Q12 1.5 12 2.5 V10 H0 Z" fill="#4b7ff2"/></svg>
<div class="row" style="left:70px;top:407.18px">外部链接<span class="cnt">1</span></div>
<svg style="left:44.6px;top:427.4px" width="4" height="7" viewBox="0 0 4 7"><path d="M0.6 0.6 L3 3 L0.6 5.4" fill="none" stroke="#a0a0a0" stroke-width="1.2"/></svg>
<svg style="left:54px;top:425.4px" width="12" height="10" viewBox="0 0 12 10"><path d="M0 1 Q0 0 1 0 H4.5 L5.5 1.5 H11 Q12 1.5 12 2.5 V10 H0 Z" fill="#4b7ff2"/></svg>
<div class="row" style="left:70px;top:423.5px">自定义类型<span class="cnt">4</span></div>
<svg style="left:32.7px;top:443.72px" width="4" height="7" viewBox="0 0 4 7"><path d="M0.6 0.6 L3 3 L0.6 5.4" fill="none" stroke="#a0a0a0" stroke-width="1.2"/></svg>
<svg style="left:42px;top:441.22px" width="13" height="11" viewBox="0 0 13 11"><path d="M2.8 7 V5.5 Q2.8 4 4.3 4 H8.7 Q10.2 4 10.2 5.5 V7" fill="none" stroke="#9a9a9a" stroke-width="0.9"/><g fill="#3ec994"><rect x="3.3" y="0" width="6.4" height="5.2" rx="1.2"/><rect x="0.5" y="6" width="4.6" height="4.6" rx="1"/><rect x="7.9" y="6" width="4.6" height="4.6" rx="1"/></g></svg>
<div class="row" style="left:58px;top:439.82000000000005px">DMHR2</div>
<svg style="left:32.7px;top:460.04px" width="4" height="7" viewBox="0 0 4 7"><path d="M0.6 0.6 L3 3 L0.6 5.4" fill="none" stroke="#a0a0a0" stroke-width="1.2"/></svg>
<svg style="left:42px;top:457.54px" width="13" height="11" viewBox="0 0 13 11"><path d="M2.8 7 V5.5 Q2.8 4 4.3 4 H8.7 Q10.2 4 10.2 5.5 V7" fill="none" stroke="#9a9a9a" stroke-width="0.9"/><g fill="#3ec994"><rect x="3.3" y="0" width="6.4" height="5.2" rx="1.2"/><rect x="0.5" y="6" width="4.6" height="4.6" rx="1"/><rect x="7.9" y="6" width="4.6" height="4.6" rx="1"/></g></svg>
<div class="row" style="left:58px;top:456.14000000000004px">DMTEST</div>
<svg style="left:32.7px;top:476.36px" width="4" height="7" viewBox="0 0 4 7"><path d="M0.6 0.6 L3 3 L0.6 5.4" fill="none" stroke="#a0a0a0" stroke-width="1.2"/></svg>
<svg style="left:42px;top:473.86px" width="13" height="11" viewBox="0 0 13 11"><path d="M2.8 7 V5.5 Q2.8 4 4.3 4 H8.7 Q10.2 4 10.2 5.5 V7" fill="none" stroke="#9a9a9a" stroke-width="0.9"/><g fill="#3ec994"><rect x="3.3" y="0" width="6.4" height="5.2" rx="1.2"/><rect x="0.5" y="6" width="4.6" height="4.6" rx="1"/><rect x="7.9" y="6" width="4.6" height="4.6" rx="1"/></g></svg>
<div class="row" style="left:58px;top:472.46000000000004px">DTS_TEST</div>
<svg style="left:32.7px;top:492.68px" width="4" height="7" viewBox="0 0 4 7"><path d="M0.6 0.6 L3 3 L0.6 5.4" fill="none" stroke="#a0a0a0" stroke-width="1.2"/></svg>
<svg style="left:42px;top:490.18px" width="13" height="11" viewBox="0 0 13 11"><path d="M2.8 7 V5.5 Q2.8 4 4.3 4 H8.7 Q10.2 4 10.2 5.5 V7" fill="none" stroke="#9a9a9a" stroke-width="0.9"/><g fill="#3ec994"><rect x="3.3" y="0" width="6.4" height="5.2" rx="1.2"/><rect x="0.5" y="6" width="4.6" height="4.6" rx="1"/><rect x="7.9" y="6" width="4.6" height="4.6" rx="1"/></g></svg>
<div class="row" style="left:58px;top:488.78000000000003px">E10</div>
<svg style="left:32.7px;top:509.0px" width="4" height="7" viewBox="0 0 4 7"><path d="M0.6 0.6 L3 3 L0.6 5.4" fill="none" stroke="#a0a0a0" stroke-width="1.2"/></svg>
<svg style="left:42px;top:506.5px" width="13" height="11" viewBox="0 0 13 11"><path d="M2.8 7 V5.5 Q2.8 4 4.3 4 H8.7 Q10.2 4 10.2 5.5 V7" fill="none" stroke="#9a9a9a" stroke-width="0.9"/><g fill="#3ec994"><rect x="3.3" y="0" width="6.4" height="5.2" rx="1.2"/><rect x="0.5" y="6" width="4.6" height="4.6" rx="1"/><rect x="7.9" y="6" width="4.6" height="4.6" rx="1"/></g></svg>
<div class="row" style="left:58px;top:505.1px">E11</div>
<div class="a" style="left:448px;top:245px;width:600px;height:300px;border-radius:9px;background:#1a1a1a"></div>
<div class="a" style="left:449px;top:246px;width:600px;height:300px;border-radius:8px;overflow:hidden;background:#fff">
<div class="a" style="left:0;top:0;width:95px;height:300px;background:#cecdd2"></div>
<div class="a" style="left:95px;top:0;width:505px;height:40px;background:#f7f7f7;border-bottom:1px solid #e4e4e4"></div>
<div class="a" style="left:95px;top:56.5px;width:505px;height:1.2px;background:#e8e8e8"></div>
</div>
<div class="a" style="left:463.5px;top:261px;width:9px;height:9px;border-radius:50%;background:#ed5b52"></div>
<div class="a" style="left:478.5px;top:261px;width:9px;height:9px;border-radius:50%;background:#f5b73c"></div>
<div class="a" style="left:493.1px;top:261px;width:9px;height:9px;border-radius:50%;background:#3ec54f"></div>
<div class="a" style="left:561px;top:267px;width:14px;height:8px;background:#fff"></div>
<div class="a" style="left:588px;top:259px;width:12px;height:16px;background:#fff"></div>
<div class="a" style="left:816px;top:259px;width:22px;height:16px;background:#fff"></div>
<div class="a" style="left:951px;top:259px;width:15px;height:16px;background:#fff"></div>
<svg style="left:562px;top:258px" width="7" height="12" viewBox="0 0 7 12"><path d="M6 0.5 L0.8 6 L6 11.5" fill="none" stroke="#b0b0b0" stroke-width="1.2"/></svg>
<svg style="left:588px;top:258px" width="7" height="12" viewBox="0 0 7 12"><path d="M1 0.5 L6.2 6 L1 11.5" fill="none" stroke="#8a8a8a" stroke-width="1.2"/></svg>
<div class="lbl" style="left:610px;top:261px;font-size:11.2px;color:#3a3a3a;font-weight:bold">DMHR</div>
<div class="a" style="left:786px;top:256px;width:29px;height:20px;border-radius:5px;background:#e4e6e6"></div>
<svg style="left:795px;top:260px" width="12" height="12" viewBox="0 0 12 12"><g fill="none" stroke="#555" stroke-width="1"><rect x="0.5" y="0.5" width="4.3" height="4.3" rx="1"/><rect x="7.2" y="0.5" width="4.3" height="4.3" rx="1"/><rect x="0.5" y="7.2" width="4.3" height="4.3" rx="1"/><rect x="7.2" y="7.2" width="4.3" height="4.3" rx="1"/></g></svg>
<svg style="left:824px;top:260px" width="14" height="11" viewBox="0 0 14 11"><g fill="#555"><circle cx="1" cy="1.2" r="1"/><circle cx="1" cy="5.5" r="1"/><circle cx="1" cy="9.8" r="1"/></g><path d="M4 1.2 H14 M4 5.5 H14 M4 9.8 H14" stroke="#555" stroke-width="1.1"/></svg>
<div class="a" style="left:847px;top:259px;width:1px;height:14px;background:#e0e0e0"></div>
<svg style="left:854px;top:259px" width="15" height="13" viewBox="0 0 15 13"><rect x="0.6" y="0.6" width="13.8" height="11.8" rx="2" fill="none" stroke="#555" stroke-width="1.1"/><path d="M5.2 0.6 V12.4 M9.8 0.6 V12.4" stroke="#555" stroke-width="1.1"/></svg>
<div class="a" style="left:877px;top:259px;width:1px;height:14px;background:#e0e0e0"></div>
<svg style="left:885px;top:259px" width="15" height="13" viewBox="0 0 15 13"><rect x="0.6" y="0.6" width="13.8" height="8" rx="1.5" fill="none" stroke="#555" stroke-width="1.1"/><path d="M0.5 11.5 H14.5" stroke="#555" stroke-width="1.3" stroke-dasharray="1.5 1"/></svg>
<svg style="left:937px;top:258px" width="15" height="14" viewBox="0 0 15 14"><path d="M0 0.6 H14" stroke="#555" stroke-width="1"/><g fill="none" stroke="#555" stroke-width="0.9"><rect x="0.5" y="2.5" width="3.5" height="3.5" rx="0.8"/><rect x="5.5" y="2.5" width="3.5" height="3.5" rx="0.8"/><rect x="10.5" y="2.5" width="3.5" height="3.5" rx="0.8"/><rect x="0.5" y="9.5" width="3.5" height="3.5" rx="0.8"/><rect x="5.5" y="9.5" width="3.5" height="3.5" rx="0.8"/><rect x="10.5" y="9.5" width="3.5" height="3.5" rx="0.8"/></g><path d="M0 7.8 H14" stroke="#555" stroke-width="1"/></svg>
<svg style="left:957px;top:263px" width="7" height="5" viewBox="0 0 7 5"><path d="M0.8 0.8 L3.5 3.8 L6.2 0.8" fill="none" stroke="#555" stroke-width="1.3"/></svg>
<svg style="left:980px;top:256px" width="12" height="16" viewBox="0 0 12 16"><path d="M3.5 6.5 H0.8 V15.2 H11.2 V6.5 H8.5 M6 10 V0.8 M3.3 3.3 L6 0.8 L8.7 3.3" fill="none" stroke="#b8b8b8" stroke-width="1.1"/></svg>
<div class="lbl" style="left:461px;top:287px;font-size:8.5px;color:#8f8f94;">个人收藏</div>
<svg style="left:462px;top:304.0px" width="12" height="11" viewBox="0 0 12 11"><circle cx="6" cy="5.5" r="5.5" fill="#5b97ea"/><path d="M2.2 9 A4.5 4.5 0 1 1 9.8 9 M3.6 8 A2.9 2.9 0 1 1 8.4 8 M5 7 A1.3 1.3 0 1 1 7 7" fill="none" stroke="#d6e6fb" stroke-width="0.7"/><path d="M6 6 L4 10.5 H8 Z" fill="#5b97ea"/></svg>
<div class="lbl" style="left:478px;top:303.7px;font-size:9.6px;color:#333333;">隔空投送</div>
<svg style="left:462px;top:324.5px" width="12" height="11" viewBox="0 0 12 11"><circle cx="6" cy="5.5" r="5" fill="none" stroke="#3b84f0" stroke-width="1.2"/><path d="M6 2.5 V5.5 L4 7" fill="none" stroke="#3b84f0" stroke-width="1.1"/></svg>
<div class="lbl" style="left:478px;top:324.2px;font-size:9.6px;color:#333333;">最近使用</div>
<svg style="left:462px;top:345.5px" width="12" height="11" viewBox="0 0 12 11"><path d="M5 1 L1.5 9.5 M7 1 L10.5 9.5 M0.5 7.5 H11.5 M4.8 4.5 L2.5 9.5" fill="none" stroke="#3b84f0" stroke-width="1.3" stroke-linecap="round"/></svg>
<div class="lbl" style="left:478px;top:345.2px;font-size:9.6px;color:#333333;">应用程序</div>
<svg style="left:462px;top:366.5px" width="12" height="11" viewBox="0 0 12 11"><circle cx="6" cy="5.5" r="5" fill="none" stroke="#3b84f0" stroke-width="1.2"/><path d="M6 2.5 V8 M3.8 6 L6 8.2 L8.2 6" fill="none" stroke="#3b84f0" stroke-width="1.1"/></svg>
<div class="lbl" style="left:478px;top:366.2px;font-size:9.6px;color:#333333;">下载</div>
<div class="lbl" style="left:461px;top:395px;font-size:8.5px;color:#9a9a9f;">iCloud</div>
<svg style="left:462px;top:411.0px" width="12" height="11" viewBox="0 0 12 11"><path d="M3 9.5 Q0.5 9.5 0.5 7 Q0.5 4.8 2.8 4.7 Q3.5 1 6.8 1 Q10 1.2 10.2 4.5 Q11.8 5 11.8 7 Q11.6 9.5 9.5 9.5 Z" fill="none" stroke="#36a5b5" stroke-width="1.1"/></svg>
<div class="lbl" style="left:478px;top:410.7px;font-size:9.6px;color:#333333;">iClou...</div>
<svg style="left:519px;top:411px" width="11" height="10" viewBox="0 0 11 10"><path d="M5.5 0.7 L10.5 9.3 H0.5 Z" fill="none" stroke="#8e8e8e" stroke-width="0.9"/><path d="M5.5 3.5 V6.5 M5.5 7.5 V8.2" stroke="#8e8e8e" stroke-width="0.9"/></svg>
<svg style="left:462px;top:431.5px" width="12" height="11" viewBox="0 0 12 11"><path d="M1.5 0.6 H6.5 L10 4 V10.4 H1.5 Z M6.5 0.6 V4 H10" fill="none" stroke="#36a5b5" stroke-width="1.1"/></svg>
<div class="lbl" style="left:478px;top:431.2px;font-size:9.6px;color:#333333;">文稿</div>
<svg style="left:462px;top:452.5px" width="12" height="11" viewBox="0 0 12 11"><rect x="0.6" y="1.5" width="11" height="8" rx="1.2" fill="none" stroke="#36a5b5" stroke-width="1.1"/><path d="M2.5 4 H9.5 M2.5 6.5 H9.5" stroke="#36a5b5" stroke-width="0.8" stroke-dasharray="1 0.6"/></svg>
<div class="lbl" style="left:478px;top:452.2px;font-size:9.6px;color:#333333;">桌面</div>
<svg style="left:462px;top:473.5px" width="12" height="11" viewBox="0 0 12 11"><path d="M0.6 2 H5 L6 3 H8 M0.6 2 V10 H11.4 V6" fill="none" stroke="#36a5b5" stroke-width="1.1"/><path d="M0.6 5 H8" stroke="#36a5b5" stroke-width="1"/><circle cx="10" cy="3" r="2" fill="none" stroke="#36a5b5" stroke-width="1"/></svg>
<div class="lbl" style="left:478px;top:473.2px;font-size:9.6px;color:#333333;">共享</div>
<div class="lbl" style="left:461px;top:501px;font-size:8.5px;color:#9a9a9f;">位置</div>
<svg style="left:574.5px;top:315px" width="36" height="46" viewBox="0 0 36 46"><defs><linearGradient id="fg" x1="0" y1="0" x2="1" y2="1"><stop offset="0" stop-color="#f2f2f2"/><stop offset="0.5" stop-color="#ececec"/><stop offset="1" stop-color="#e4e7e7"/></linearGradient></defs><path d="M1 1 H23 L34.5 12.5 V44.5 H1 Z" fill="url(#fg)" stroke="#dcdcdc" stroke-width="1"/><g stroke="#d2d2d4" stroke-width="0.6"><path d="M5.0 3 V43"/><path d="M6.3 3 V43"/><path d="M7.6 3 V43"/><path d="M8.9 3 V43"/><path d="M10.2 3 V43"/><path d="M11.5 3 V43"/><path d="M12.8 3 V43"/><path d="M14.1 3 V43"/><path d="M15.4 3 V43"/><path d="M16.7 3 V43"/><path d="M18.0 3 V43"/><path d="M19.3 3 V43"/><path d="M20.6 3 V43"/><path d="M21.9 3 V43"/></g><rect x="8" y="3" width="11" height="40" fill="#dadadc" opacity="0.5"/><path d="M23 1 V12.5 H34.5 Z" fill="#f6f6f6" stroke="#d4d4d4" stroke-width="0.8"/><text x="17.5" y="40" font-size="6.4" font-family="Liberation Sans" fill="#8a8a8a" text-anchor="middle">CSV</text></svg>
<svg style="left:655.5px;top:315px" width="36" height="46" viewBox="0 0 36 46"><defs><linearGradient id="fg" x1="0" y1="0" x2="1" y2="1"><stop offset="0" stop-color="#f2f2f2"/><stop offset="0.5" stop-color="#ececec"/><stop offset="1" stop-color="#e4e7e7"/></linearGradient></defs><path d="M1 1 H23 L34.5 12.5 V44.5 H1 Z" fill="url(#fg)" stroke="#dcdcdc" stroke-width="1"/><g stroke="#d2d2d4" stroke-width="0.6"><path d="M5.0 3 V43"/><path d="M6.3 3 V43"/><path d="M7.6 3 V43"/><path d="M8.9 3 V43"/><path d="M10.2 3 V43"/><path d="M11.5 3 V43"/><path d="M12.8 3 V43"/><path d="M14.1 3 V43"/><path d="M15.4 3 V43"/><path d="M16.7 3 V43"/><path d="M18.0 3 V43"/><path d="M19.3 3 V43"/><path d="M20.6 3 V43"/><path d="M21.9 3 V43"/></g><rect x="8" y="3" width="11" height="40" fill="#dadadc" opacity="0.5"/><path d="M23 1 V12.5 H34.5 Z" fill="#f6f6f6" stroke="#d4d4d4" stroke-width="0.8"/><text x="17.5" y="40" font-size="6.4" font-family="Liberation Sans" fill="#8a8a8a" text-anchor="middle">CSV</text></svg>
<svg style="left:737.5px;top:315px" width="36" height="46" viewBox="0 0 36 46"><defs><linearGradient id="fg" x1="0" y1="0" x2="1" y2="1"><stop offset="0" stop-color="#f2f2f2"/><stop offset="0.5" stop-color="#ececec"/><stop offset="1" stop-color="#e4e7e7"/></linearGradient></defs><path d="M1 1 H23 L34.5 12.5 V44.5 H1 Z" fill="url(#fg)" stroke="#dcdcdc" stroke-width="1"/><path d="M23 1 V12.5 H34.5 Z" fill="#f6f6f6" stroke="#d4d4d4" stroke-width="0.8"/><text x="17.5" y="40" font-size="6.4" font-family="Liberation Sans" fill="#8a8a8a" text-anchor="middle">CSV</text></svg>
<svg style="left:818.5px;top:315px" width="36" height="46" viewBox="0 0 36 46"><defs><linearGradient id="fg" x1="0" y1="0" x2="1" y2="1"><stop offset="0" stop-color="#f2f2f2"/><stop offset="0.5" stop-color="#ececec"/><stop offset="1" stop-color="#e4e7e7"/></linearGradient></defs><path d="M1 1 H23 L34.5 12.5 V44.5 H1 Z" fill="url(#fg)" stroke="#dcdcdc" stroke-width="1"/><path d="M23 1 V12.5 H34.5 Z" fill="#f6f6f6" stroke="#d4d4d4" stroke-width="0.8"/><text x="17.5" y="40" font-size="6.4" font-family="Liberation Sans" fill="#8a8a8a" text-anchor="middle">CSV</text></svg>
<svg style="left:899.5px;top:315px" width="36" height="46" viewBox="0 0 36 46"><defs><linearGradient id="fg" x1="0" y1="0" x2="1" y2="1"><stop offset="0" stop-color="#f2f2f2"/><stop offset="0.5" stop-color="#ececec"/><stop offset="1" stop-color="#e4e7e7"/></linearGradient></defs><path d="M1 1 H23 L34.5 12.5 V44.5 H1 Z" fill="url(#fg)" stroke="#dcdcdc" stroke-width="1"/><path d="M23 1 V12.5 H34.5 Z" fill="#f6f6f6" stroke="#d4d4d4" stroke-width="0.8"/><text x="17.5" y="40" font-size="6.4" font-family="Liberation Sans" fill="#8a8a8a" text-anchor="middle">CSV</text></svg>
<svg style="left:980.5px;top:315px" width="36" height="46" viewBox="0 0 36 46"><defs><linearGradient id="fg" x1="0" y1="0" x2="1" y2="1"><stop offset="0" stop-color="#f2f2f2"/><stop offset="0.5" stop-color="#ececec"/><stop offset="1" stop-color="#e4e7e7"/></linearGradient></defs><path d="M1 1 H23 L34.5 12.5 V44.5 H1 Z" fill="url(#fg)" stroke="#dcdcdc" stroke-width="1"/><path d="M23 1 V12.5 H34.5 Z" fill="#f6f6f6" stroke="#d4d4d4" stroke-width="0.8"/><text x="17.5" y="40" font-size="6.4" font-family="Liberation Sans" fill="#8a8a8a" text-anchor="middle">CSV</text></svg>
<div class="fs" style="left:592px;top:366.5px;transform:translateX(-50%)">EMPLOYEE.csv</div>
<svg style="left:586.5px;top:379.5px" width="11" height="7" viewBox="0 0 11 7"><path d="M2.5 6.5 Q0.3 6.5 0.3 4.6 Q0.3 3 2 2.9 Q2.6 0.4 5.3 0.4 Q7.8 0.6 8.2 2.8 Q10.7 3 10.7 4.7 Q10.6 6.5 8.5 6.5 Z" fill="none" stroke="#888" stroke-width="0.8"/><path d="M5.5 2.5 V5" stroke="#888" stroke-width="0.7"/></svg>
<div class="fs" style="left:673px;top:366.5px;transform:translateX(-50%)">CUSTOMERS.csv</div>
<svg style="left:667.5px;top:379.5px" width="11" height="7" viewBox="0 0 11 7"><path d="M2.5 6.5 Q0.3 6.5 0.3 4.6 Q0.3 3 2 2.9 Q2.6 0.4 5.3 0.4 Q7.8 0.6 8.2 2.8 Q10.7 3 10.7 4.7 Q10.6 6.5 8.5 6.5 Z" fill="none" stroke="#888" stroke-width="0.8"/><path d="M5.5 2.5 V5" stroke="#888" stroke-width="0.7"/></svg>
<div class="fs" style="left:755px;top:366.5px;transform:translateX(-50%)">BUSINESS_TASK.</div>
<div class="fs" style="left:740px;top:378.5px">csv</div>
<svg style="left:758px;top:379.5px" width="11" height="7" viewBox="0 0 11 7"><path d="M2.5 6.5 Q0.3 6.5 0.3 4.6 Q0.3 3 2 2.9 Q2.6 0.4 5.3 0.4 Q7.8 0.6 8.2 2.8 Q10.7 3 10.7 4.7 Q10.6 6.5 8.5 6.5 Z" fill="none" stroke="#888" stroke-width="0.8"/><path d="M5.5 2.5 V5" stroke="#888" stroke-width="0.7"/></svg>
<div class="fs" style="left:808px;top:366px">SALES.csv</div>
<svg style="left:855px;top:367px" width="11" height="7" viewBox="0 0 11 7"><path d="M2.5 6.5 Q0.3 6.5 0.3 4.6 Q0.3 3 2 2.9 Q2.6 0.4 5.3 0.4 Q7.8 0.6 8.2 2.8 Q10.7 3 10.7 4.7 Q10.6 6.5 8.5 6.5 Z" fill="none" stroke="#888" stroke-width="0.8"/><path d="M5.5 2.5 V5" stroke="#888" stroke-width="0.7"/></svg>
<div class="fs" style="left:885px;top:366.5px">ORDERS.csv</div>
<svg style="left:941.5px;top:368px" width="11" height="7" viewBox="0 0 11 7"><path d="M2.5 6.5 Q0.3 6.5 0.3 4.6 Q0.3 3 2 2.9 Q2.6 0.4 5.3 0.4 Q7.8 0.6 8.2 2.8 Q10.7 3 10.7 4.7 Q10.6 6.5 8.5 6.5 Z" fill="none" stroke="#888" stroke-width="0.8"/><path d="M5.5 2.5 V5" stroke="#888" stroke-width="0.7"/></svg>
<div class="fs" style="left:964px;top:366.5px">JOB_HISTORY.</div>
<div class="fs" style="left:991px;top:378.5px">v</div>
<svg style="left:620px;top:394px" width="10" height="15" viewBox="0 0 10 15"><path d="M1 1 L1 12 L3.8 9.5 L5.8 13.8 L7.6 13 L5.7 8.8 L9.3 8.8 Z" fill="#111" stroke="#fff" stroke-width="0.8"/></svg>
<div class="a" style="left:0;top:70.3px;width:1000px;height:1.7px;background:#202020"></div>
</div>
</body></html>
